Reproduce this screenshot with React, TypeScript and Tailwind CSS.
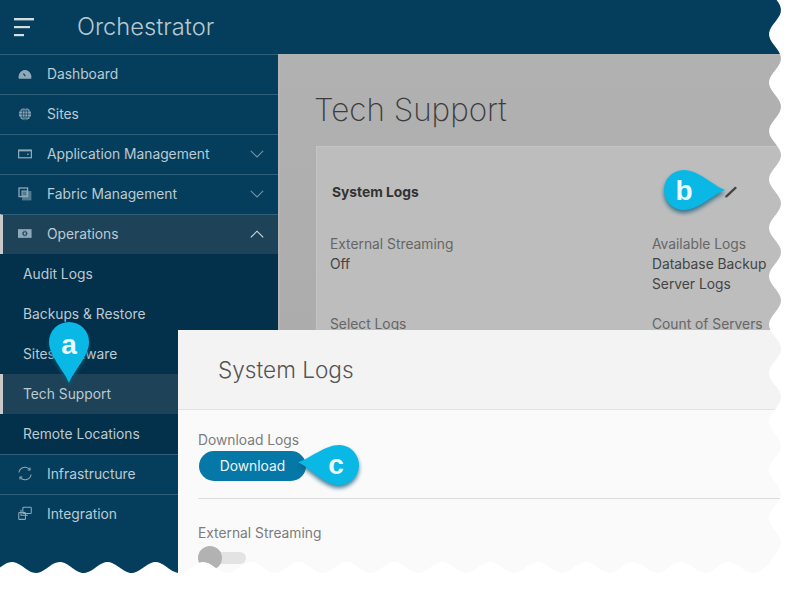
import React from "react";

const iconColor = "#8fa9b8";

function DashIcon() {
  return (
    <svg width="16" height="14" viewBox="0 0 16 14">
      <path d="M1 12.5C0.7 12 0.5 10 0.8 9C1.6 5.5 4.5 2.5 8 2.5s6.4 3 7.2 6.5c.3 1 .1 3-.2 3.5Z" fill={iconColor} />
      <path d="M6.2 6.5L8.4 9.4" stroke="#053e5c" strokeWidth="1.2" />
    </svg>
  );
}
function GlobeIcon() {
  return (
    <svg width="16" height="16" viewBox="0 0 16 16">
      <circle cx="8" cy="8" r="7" fill={iconColor} />
      <g stroke="#053e5c" strokeWidth="0.8" fill="none">
        <ellipse cx="8" cy="8" rx="3.2" ry="7" />
        <path d="M8 1v14M1 8h14M2 4.6h12M2 11.4h12" />
      </g>
    </svg>
  );
}
function AppIcon() {
  return (
    <svg width="16" height="12" viewBox="0 0 16 12">
      <rect x="0.7" y="1.7" width="14.6" height="8.6" fill="none" stroke={iconColor} strokeWidth="1.4" />
      <rect x="0.5" y="1" width="15" height="2" fill={iconColor} />
      <rect x="10.5" y="5.5" width="1.6" height="1.6" fill={iconColor} />
    </svg>
  );
}
function FabricIcon() {
  return (
    <svg width="14" height="14" viewBox="0 0 14 14">
      <rect x="4" y="4" width="9.4" height="9.4" fill={iconColor} opacity="0.55" />
      <rect x="1" y="1" width="8.6" height="8.6" fill="none" stroke={iconColor} strokeWidth="1.3" />
      <rect x="4" y="4" width="5" height="5" fill="none" stroke={iconColor} strokeWidth="1" />
    </svg>
  );
}
function OpsIcon() {
  return (
    <svg width="16" height="11" viewBox="0 0 16 11">
      <rect x="0" y="0.5" width="15.5" height="10" fill={iconColor} />
      <circle cx="7.8" cy="5.5" r="2" fill="none" stroke="#1e4358" strokeWidth="1.3" />
      <circle cx="7.8" cy="5.5" r="3" fill="none" stroke="#1e4358" strokeWidth="0.7" strokeDasharray="1 1" />
    </svg>
  );
}
function SyncIcon() {
  return (
    <svg width="15" height="15" viewBox="0 0 15 15" fill="none" stroke={iconColor} strokeWidth="1.1">
      <path d="M1 6.4A6.5 6.5 0 0 1 12.6 3.3" />
      <path d="M14 8.6A6.5 6.5 0 0 1 2.4 11.7" />
      <path d="M12.9 1.2V3.8H10.4" />
      <path d="M2.1 13.8V11.2H4.6" />
    </svg>
  );
}
function IntegrationIcon() {
  return (
    <svg width="15" height="15" viewBox="0 0 15 15" fill="none" stroke={iconColor} strokeWidth="1.1">
      <rect x="5.2" y="0.8" width="9" height="6.6" rx="0.8" />
      <path d="M3.2 3.4V9.4H10.5" />
      <rect x="0.8" y="6.4" width="7.2" height="7.4" rx="0.8" />
    </svg>
  );
}
function Chevron({ up }: { up?: boolean }) {
  return (
    <svg width="14" height="8" viewBox="0 0 14 8" fill="none" stroke={up ? "#d5dde2" : "#6f93a6"} strokeWidth="1.1">
      <path d={up ? "M0.8 7.4L7 1.2L13.2 7.4" : "M0.8 0.8L7 7L13.2 0.8"} />
    </svg>
  );
}

function Row({
  icon,
  label,
  chevron,
  active,
}: {
  icon: React.ReactNode;
  label: string;
  chevron?: "up" | "down";
  active?: boolean;
}) {
  return (
    <div
      className={
        "h-10 pb-0.5 flex items-center border-t border-[#2f6079] " +
        (active ? "bg-[#1e4358] border-l-[3px] border-l-[#c9c9c9] pl-[15px]" : "pl-[18px]")
      }
    >
      <span className="w-[14px] h-4 flex items-center justify-center">{icon}</span>
      <span className="ml-[15px] flex-1 text-[#bccad2]">{label}</span>
      {chevron && (
        <span className="mr-[14px] flex">
          <Chevron up={chevron === "up"} />
        </span>
      )}
    </div>
  );
}

function Sub({ label, active }: { label: string; active?: boolean }) {
  return (
    <div
      className={
        "h-10 flex items-center text-[#bccad2] " +
        (active ? "bg-[#1e4358] border-l-[3px] border-l-[#c9c9c9] pl-5" : "pl-[23px]")
      }
    >
      {label}
    </div>
  );
}

const PIN = "M0 41C-4 30-20 14-20 0A20 20 0 1 1 20 0C20 14 4 30 0 41Z";

function Pin({
  x,
  y,
  angle,
  letter,
  labelClass,
}: {
  x: number;
  y: number;
  angle: number;
  letter: string;
  labelClass: string;
}) {
  return (
    <div className="absolute w-0 h-0" style={{ left: x, top: y }}>
      <svg
        width="110"
        height="110"
        viewBox="-55 -55 110 110"
        className="absolute -left-[55px] -top-[55px] drop-shadow-[0_3px_2px_rgba(8,90,120,0.75)]"
      >
        <path d={PIN} fill="#0ab8e6" transform={`rotate(${angle})`} />
      </svg>
      <span
        className={
          "absolute w-10 h-10 flex items-center justify-center text-[#eafaff] font-bold text-[28px] font-['Liberation_Sans',sans-serif] " +
          labelClass
        }
      >
        {letter}
      </span>
    </div>
  );
}

function wavePath() {
  const right = (y: number) => 775 + 6 * Math.cos((2 * Math.PI * (y - 10)) / 48.4);
  const bottom = (x: number) => 567.5 - 5.5 * Math.cos((2 * Math.PI * (x - 12)) / 47.8);
  let d = "M0 0H805V598H0Z";
  d += "M0 0";
  const pts: string[] = [];
  let endX = 775;
  for (let y = 0; y < 568; y += 3) {
    pts.push(`L${right(y).toFixed(1)} ${y}`);
    endX = right(y);
  }
  for (let x = Math.round(endX); x >= 0; x -= 3) {
    pts.push(`L${x} ${bottom(x).toFixed(1)}`);
  }
  pts.push(`L0 ${bottom(0).toFixed(1)}`);
  return d + pts.join("") + "Z";
}

export default function App() {
  return (
    <div className="relative w-[805px] h-[598px] overflow-hidden bg-white text-[13.8px] leading-5 font-['Inter',sans-serif]">
      <header className="h-[54px] flex items-center bg-[#053e5c]">
        <svg width="22" height="20" viewBox="0 0 22 20" className="ml-[13px]" fill="#d3dce1">
          <rect x="1" y="1" width="20" height="2.4" />
          <rect x="1" y="9" width="16" height="2.2" />
          <rect x="1" y="17" width="10" height="2.2" />
        </svg>
        <span className="ml-[42px] text-[23.7px] font-light text-[#b9c8d1]">Orchestrator</span>
      </header>
      <div className="flex h-[544px]">
        <nav className="w-[278px] shrink-0 bg-[#053e5c]">
          <Row icon={<DashIcon />} label="Dashboard" />
          <Row icon={<GlobeIcon />} label="Sites" />
          <Row icon={<AppIcon />} label="Application Management" chevron="down" />
          <Row icon={<FabricIcon />} label="Fabric Management" chevron="down" />
          <Row icon={<OpsIcon />} label="Operations" chevron="up" active />
          <div className="bg-[#03304a]">
            <Sub label="Audit Logs" />
            <Sub label="Backups & Restore" />
            <Sub label="Sites Software" />
            <Sub label="Tech Support" active />
            <Sub label="Remote Locations" />
          </div>
          <Row icon={<SyncIcon />} label="Infrastructure" />
          <Row icon={<IntegrationIcon />} label="Integration" />
        </nav>
        <main className="flex-1 bg-gradient-to-b from-[#b1b1b1] to-[#a8a8a8] pl-[38px] border-l-2 border-l-[#b4b4b4]">
          <h1 className="mt-[35px] h-[57px] -ml-1 text-[31.4px] leading-[42px] font-extralight text-[#3c3c3c]">Tech Support</h1>
          <section className="h-[300px] -ml-0.5 bg-[#bdbdbd] border-l border-t border-[#c4c4c4] pl-[13px]">
            <div className="h-[46px] pt-[35px] pl-0.5 font-bold text-[#333] box-content">System Logs</div>
            <div className="grid grid-cols-[322px_1fr] pt-1.5">
              <div>
                <div className="text-[#666]">External Streaming</div>
                <div className="text-[#444]">Off</div>
              </div>
              <div>
                <div className="text-[#666]">Available Logs</div>
                <div className="text-[#444]">Database Backup</div>
                <div className="text-[#444]">Server Logs</div>
              </div>
              <div className="mt-[20px] text-[#666]">Select Logs</div>
              <div className="mt-[20px] text-[#666]">Count of Servers</div>
            </div>
          </section>
        </main>
      </div>

      <svg width="14" height="14" viewBox="0 0 14 14" className="absolute left-[724px] top-[185px]">
        <path d="M1 12.6L1.6 10.6L11.2 1.6L13 3.1L3.2 12.2Z" fill="#444" />
      </svg>

      <div className="absolute left-[178px] top-[330px] right-0 bottom-0 bg-[#fafafa] rounded-tl-sm">
        <div className="h-20 pl-10 flex items-center bg-[#f3f3f3] border-b border-[#e2e2e2] text-[22.6px] font-light text-[#555]">
          System Logs
        </div>
        <div className="pl-5 pr-6">
          <div className="pt-5 text-[#7c7c7c]">Download Logs</div>
          <button className="ml-px mt-px w-[107px] h-[30px] rounded-full bg-[#0678a8] text-[#eef6fa]">Download</button>
          <div className="mt-[17px] border-t border-[#dcdcdc]" />
          <div className="pt-6 text-[#7c7c7c]">External Streaming</div>
          <div className="relative mt-[3px] h-6 w-12 flex items-center">
            <div className="ml-2 w-10 h-3 rounded-full bg-[#e3e3e3]" />
            <div className="absolute left-0 top-0 w-6 h-6 rounded-full bg-[#b2b2b2]" />
          </div>
        </div>
      </div>

      <Pin x={69} y={342} angle={0} letter="a" labelClass="-left-5 -top-[17px]" />
      <Pin x={684} y={190} angle={-90} letter="b" labelClass="-left-5 -top-[19px]" />
      <Pin x={339} y={465} angle={94} letter="c" labelClass="-left-[23px] -top-5" />

      <svg width="805" height="598" viewBox="0 0 805 598" className="absolute left-0 top-0">
        <path d={wavePath()} fill="#fff" fillRule="evenodd" />
      </svg>
    </div>
  );
}
